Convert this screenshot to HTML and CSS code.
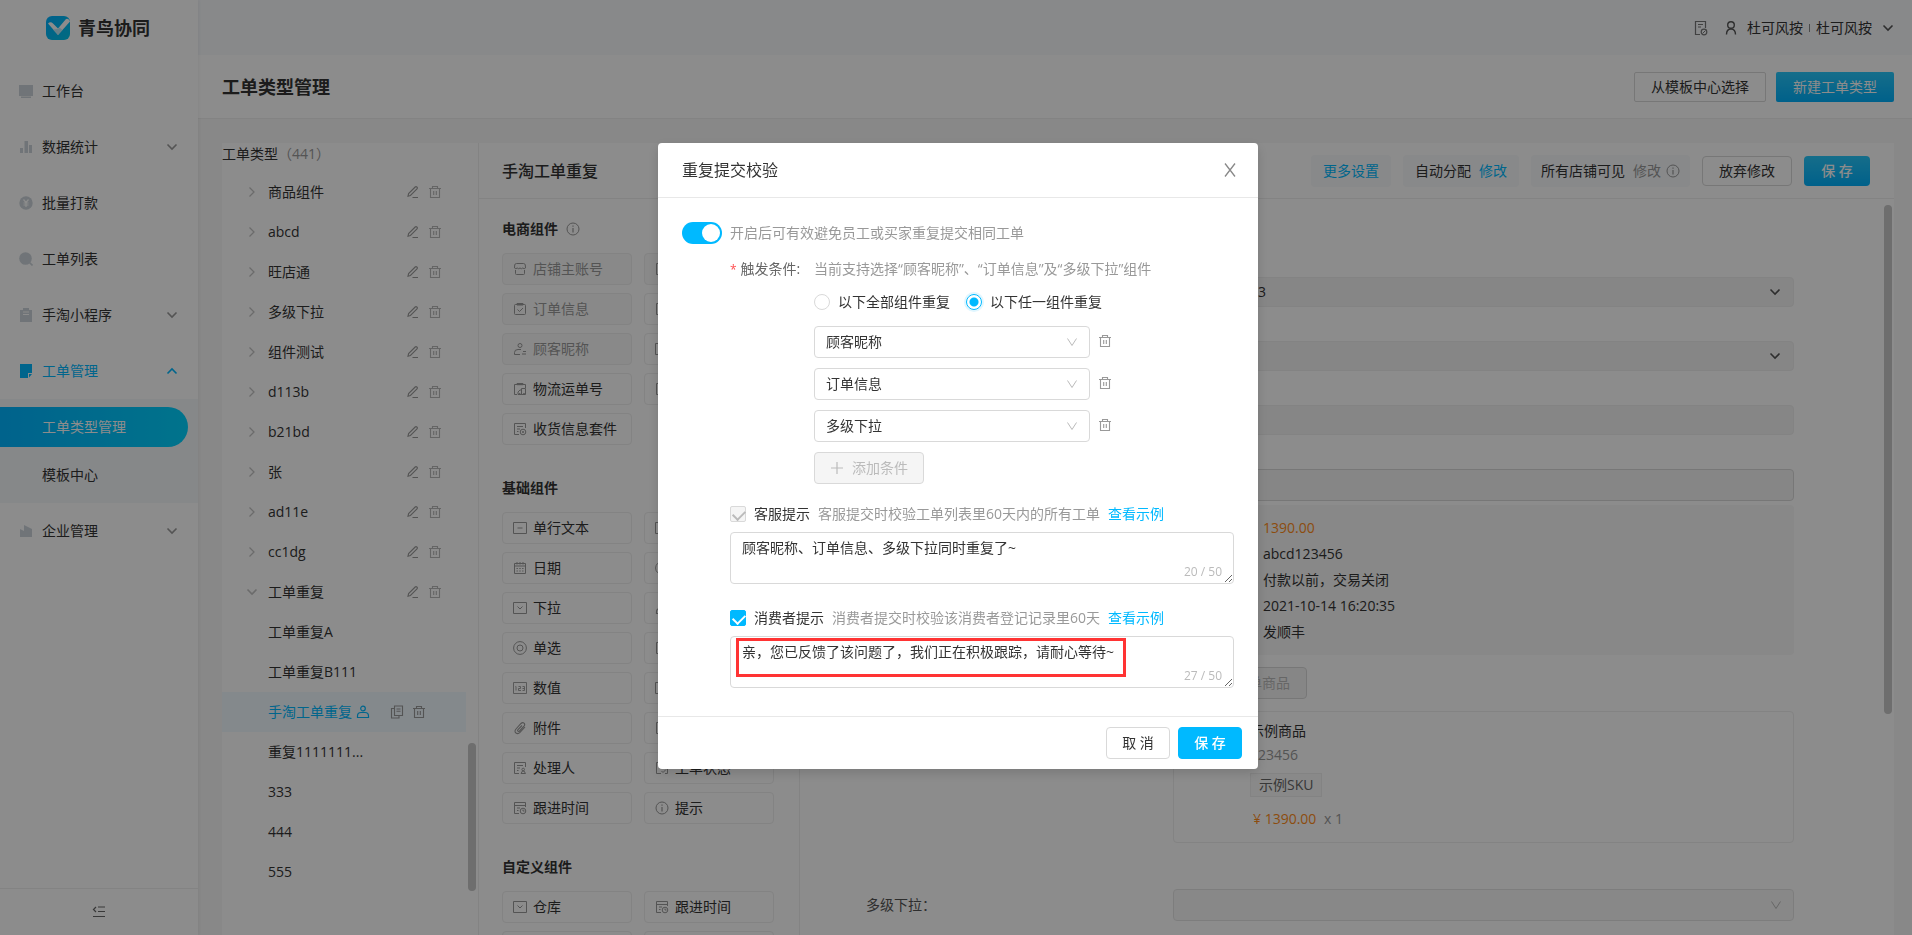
FILE: index.html
```html
<!DOCTYPE html>
<html lang="zh-CN">
<head>
<meta charset="utf-8">
<title>工单类型管理</title>
<link rel="stylesheet" href="styles.css">
</head>
<body>
<svg class="sprite" aria-hidden="true">
  <symbol id="down" viewBox="0 0 12 12"><path d="M1.5 3.5 6 8l4.500-4.500" fill="none" stroke="currentColor" stroke-width="1.600"/></symbol>
  <symbol id="up" viewBox="0 0 12 12"><path d="M1.500 8.500 6 4l4.500 4.500" fill="none" stroke="currentColor" stroke-width="1.600"/></symbol>
  <symbol id="right" viewBox="0 0 12 12"><path d="M3.500 1.500 8 6l-4.500 4.500" fill="none" stroke="currentColor" stroke-width="1.300"/></symbol>
  <symbol id="thin-down" viewBox="0 0 12 12"><path d="M1.500 2.500 6 9.500l4.500-7" fill="none" stroke="currentColor" stroke-width="1"/></symbol>
  <symbol id="edit" viewBox="0 0 14 14"><path d="M2 11.200 2.600 8.600 9.200 2q.8-.8 1.600 0l.2.200q.8.800 0 1.600L4.400 10.400zM6.500 12.500H12" fill="none" stroke="currentColor" stroke-width="1.100"/></symbol>
  <symbol id="trash" viewBox="0 0 14 14"><path d="M1 3.500h12M4.500 3.500v-2h5v2M2.500 3.500v9h9v-9M5.700 6v4M8.300 6v4" fill="none" stroke="currentColor" stroke-width="1.100"/></symbol>
  <symbol id="copy" viewBox="0 0 14 14"><path d="M4.500 1h8v9.500h-8zM4.500 3.500h-3V13h7.500v-2.500M6.500 4h4M6.500 6.200h4" fill="none" stroke="currentColor" stroke-width="1.100"/></symbol>
  <symbol id="person" viewBox="0 0 14 14"><circle cx="7" cy="3.500" r="2.300" fill="none" stroke="currentColor" stroke-width="1.200"/><path d="M1.500 12.500V11q0-3.500 3.500-3.500h4q3.500 0 3.500 3.500v1.500z" fill="none" stroke="currentColor" stroke-width="1.200"/></symbol>
  <symbol id="info" viewBox="0 0 14 14"><circle cx="7" cy="7" r="6" fill="none" stroke="currentColor"/><path d="M7 6v4.500M7 3.500v1.300" fill="none" stroke="currentColor" stroke-width="1.200"/></symbol>
  <symbol id="shop" viewBox="0 0 14 14"><path d="M3.500 1.500h7q1.500 0 1.800 1.500l.2 3q-1.300 1.400-2.700 0-1.400 1.400-2.800 0-1.400 1.400-2.800 0-1.400 1.400-2.700 0l.2-3q.3-1.500 1.800-1.500zM2.500 8v3.500q0 1 1 1h7q1 0 1-1V8" fill="none" stroke="currentColor"/></symbol>
  <symbol id="order" viewBox="0 0 14 14"><path d="M2.500 2.500h9q1 0 1 1v8q0 1-1 1h-9q-1 0-1-1v-8q0-1 1-1zM4 1.500h6v1.500H4zM4.500 7.500l2 2 3.500-3.500" fill="none" stroke="currentColor"/></symbol>
  <symbol id="nick" viewBox="0 0 14 14"><circle cx="7" cy="3.500" r="2" fill="none" stroke="currentColor"/><path d="M8 7.500H5q-3.500 0-3.500 3v2H7M10 9.500h3M9 12h4" fill="none" stroke="currentColor"/></symbol>
  <symbol id="ship" viewBox="0 0 14 14"><path d="M12.500 6V2.500h-11v10H4M4 1.500h6v1.200H4zM5 12.500V10l2-2h1.500v4.500zM8.500 6.500h4v6h-4z" fill="none" stroke="currentColor"/><circle cx="6.500" cy="12" r="1" fill="currentColor"/><circle cx="11" cy="12" r="1" fill="currentColor"/></symbol>
  <symbol id="doc" viewBox="0 0 14 14"><path d="M6 12.500H1.500v-11h11V6M4 4.500h6M4 7h3M4 9.500h1.500" fill="none" stroke="currentColor"/><circle cx="10" cy="10" r="2.800" fill="none" stroke="currentColor"/><circle cx="10" cy="10" r="1" fill="currentColor"/></symbol>
  <symbol id="time" viewBox="0 0 14 14"><path d="M6 12.500H1.500v-11h11V6M1.500 4.500h11M4 7h3M4 9.500h1.500" fill="none" stroke="currentColor"/><circle cx="10" cy="10" r="2.800" fill="none" stroke="currentColor"/><path d="M10 8.500V10h1.500" fill="none" stroke="currentColor"/></symbol>
  <symbol id="handler" viewBox="0 0 14 14"><path d="M6 12.500H1.500v-11h11V6M4 4.500h6M4 7h3M4 9.500h1.500M8 12.500h4.500l-1.500-2.500h-1.500z" fill="none" stroke="currentColor"/><circle cx="10.200" cy="8.500" r="1.300" fill="none" stroke="currentColor"/></symbol>
  <symbol id="status" viewBox="0 0 14 14"><path d="M6 12.500H1.500v-11h11v11H10M4 4.500h6M4 7h3M6.500 10l1.500 1.500L11 8.500" fill="none" stroke="currentColor"/></symbol>
  <symbol id="line" viewBox="0 0 14 14"><path d="M.5 1.500h13v11H.5zM4.500 7h5" fill="none" stroke="currentColor"/></symbol>
  <symbol id="date" viewBox="0 0 14 14"><path d="M1.500 2.500h11v10h-11zM1.500 5h11M4 1v2.500M7 1v2.500M10 1v2.500" fill="none" stroke="currentColor"/><path d="M3.500 7.500h7M3.500 10h7" stroke="currentColor" stroke-dasharray="1.400"/></symbol>
  <symbol id="drop" viewBox="0 0 14 14"><path d="M.5 1.500h13v11H.5zM4.500 5.500 7 8l2.500-2.500" fill="none" stroke="currentColor"/></symbol>
  <symbol id="ring" viewBox="0 0 14 14"><circle cx="7" cy="7" r="6.400" fill="none" stroke="currentColor"/><circle cx="7" cy="7" r="3" fill="none" stroke="currentColor"/></symbol>
  <symbol id="num" viewBox="0 0 14 14"><path d="M.5 1.500h13v11H.5zM3 5.500v4M2.500 5.500H3M5.500 5.500h2v2h-2v2h2.500M9.500 5.500h2v4h-2M9.500 7.500h2" fill="none" stroke="currentColor" stroke-width=".9"/></symbol>
  <symbol id="clip" viewBox="0 0 14 14"><path d="M12 6 7 11.400q-2 2-4 .6-2-1.600 0-4L8 2.500q1.600-1.500 3-.3 1.400 1.300 0 3L6.500 10q-1 .8-1.600.2-.7-.7.100-1.600L9 4.500" fill="none" stroke="currentColor" stroke-width="1.100"/></symbol>
  <symbol id="box" viewBox="0 0 14 14"><path d="M1.500 1.500h11v11h-11zM4 5h6M4 8h6" fill="none" stroke="currentColor"/></symbol>
</svg>

<div class="app">
  <aside class="side">
    <div class="brand">
      <svg class="brand-mark" viewBox="0 0 24 24"><defs><linearGradient id="bg" x1="0" y1="0" x2="1" y2="1"><stop offset="0" stop-color="#00b0ff"/><stop offset="1" stop-color="#00c4ea"/></linearGradient></defs><rect width="24" height="24" rx="6" fill="url(#bg)"/><path d="M2 7.500q2.500-2.500 5 0l5 5L20 3q3-1 4 2.500L12 19z" fill="#fff"/><path d="M7 13.500 12 19l4.500-5-3-2.500-1.500 1.500z" fill="#bfe9f7"/></svg>
      <span>青鸟协同</span>
    </div>
    <nav class="menu">
      <a class="item" href="#"><svg class="mi" viewBox="0 0 14 14"><path d="M0 1h14v11H0zM2 12.500h10V14H2z" fill="currentColor"/></svg>工作台</a>
      <a class="item" href="#"><svg class="mi" viewBox="0 0 14 14"><path d="M1 8h3v5H1zM5.500 1h3.500v12H5.500zM10 5h3v8h-3z" fill="currentColor"/></svg>数据统计<svg class="arrow"><use href="#down"/></svg></a>
      <a class="item" href="#"><svg class="mi" viewBox="0 0 14 14"><circle cx="7" cy="7" r="6.700" fill="currentColor"/><path d="M4.500 3.500 7 6.500l2.500-3M7 6.500V11M4.500 7h5M4.500 9h5" fill="none" stroke="#fff" stroke-width="1.200"/></svg>批量打款</a>
      <a class="item" href="#"><svg class="mi" viewBox="0 0 14 14"><circle cx="6.500" cy="6.500" r="6.300" fill="currentColor"/><path d="m10 10 3.500 3.500" stroke="currentColor" stroke-width="1.600"/></svg>工单列表</a>
      <a class="item" href="#"><svg class="mi" viewBox="0 0 14 14"><path d="M1 2h3V0h6v2h3v12H1z" fill="currentColor"/><path d="M4 4h6M4 6.500h6" stroke="#fff"/></svg>手淘小程序<svg class="arrow"><use href="#down"/></svg></a>
      <a class="item open" href="#"><svg class="mi" viewBox="0 0 14 14"><path d="M1 0h12v9H9v5H1zM10 10h3l-3 3.500z" fill="currentColor"/></svg>工单管理<svg class="arrow"><use href="#up"/></svg></a>
      <div class="submenu">
        <a class="sub active" href="#">工单类型管理</a>
        <a class="sub" href="#">模板中心</a>
      </div>
      <a class="item" href="#"><svg class="mi" viewBox="0 0 14 14"><path d="M1 5l4 2V1l8 4v8H1z" fill="currentColor"/></svg>企业管理<svg class="arrow"><use href="#down"/></svg></a>
    </nav>
    <button class="collapse" type="button" aria-label="收起"><svg viewBox="0 0 14 14"><path d="M4 2 1.500 4.500 4 7M6 2h7M6 6.500h7M1 11.500h12" fill="none" stroke="currentColor" stroke-width="1.200"/></svg></button>
  </aside>

  <div class="main">
    <header class="top">
      <svg class="ic16" viewBox="0 0 16 16"><path d="M7 14.500H2.500v-13h10V8M5 4.500h5M5 7h3" fill="none" stroke="currentColor" stroke-width="1.200"/><circle cx="11" cy="12" r="2.800" fill="none" stroke="currentColor" stroke-width="1.200"/><path d="m9.500 13.500 3-3" stroke="currentColor"/></svg>
      <svg class="ic16 dark" viewBox="0 0 16 16"><circle cx="8" cy="5" r="3.300" fill="none" stroke="currentColor" stroke-width="1.400"/><path d="M3.500 14.500q0-5.500 4.500-5.500t4.500 5.500" fill="none" stroke="currentColor" stroke-width="1.400"/></svg>
      <span class="who">杜可风按</span><i class="bar"></i><span>杜可风按</span>
      <svg class="arrow dark"><use href="#down"/></svg>
    </header>
    <div class="titlebar">
      <h1>工单类型管理</h1>
      <button class="btn square" type="button">从模板中心选择</button>
      <button class="btn square grad" type="button">新建工单类型</button>
    </div>
    <div class="content">
      <section class="tree">
        <div class="tree-title">工单类型<span>（441）</span></div>
        <ul>
          <li><svg class="caret"><use href="#right"/></svg><span>商品组件</span><svg class="act"><use href="#edit"/></svg><svg class="act del"><use href="#trash"/></svg></li>
          <li><svg class="caret"><use href="#right"/></svg><span>abcd</span><svg class="act"><use href="#edit"/></svg><svg class="act del"><use href="#trash"/></svg></li>
          <li><svg class="caret"><use href="#right"/></svg><span>旺店通</span><svg class="act"><use href="#edit"/></svg><svg class="act del"><use href="#trash"/></svg></li>
          <li><svg class="caret"><use href="#right"/></svg><span>多级下拉</span><svg class="act"><use href="#edit"/></svg><svg class="act del"><use href="#trash"/></svg></li>
          <li><svg class="caret"><use href="#right"/></svg><span>组件测试</span><svg class="act"><use href="#edit"/></svg><svg class="act del"><use href="#trash"/></svg></li>
          <li><svg class="caret"><use href="#right"/></svg><span>d113b</span><svg class="act"><use href="#edit"/></svg><svg class="act del"><use href="#trash"/></svg></li>
          <li><svg class="caret"><use href="#right"/></svg><span>b21bd</span><svg class="act"><use href="#edit"/></svg><svg class="act del"><use href="#trash"/></svg></li>
          <li><svg class="caret"><use href="#right"/></svg><span>张</span><svg class="act"><use href="#edit"/></svg><svg class="act del"><use href="#trash"/></svg></li>
          <li><svg class="caret"><use href="#right"/></svg><span>ad11e</span><svg class="act"><use href="#edit"/></svg><svg class="act del"><use href="#trash"/></svg></li>
          <li><svg class="caret"><use href="#right"/></svg><span>cc1dg</span><svg class="act"><use href="#edit"/></svg><svg class="act del"><use href="#trash"/></svg></li>
          <li><svg class="caret"><use href="#down"/></svg><span>工单重复</span><svg class="act"><use href="#edit"/></svg><svg class="act del"><use href="#trash"/></svg></li>
          <li class="leaf"><span>工单重复A</span></li>
          <li class="leaf"><span>工单重复B111</span></li>
          <li class="leaf current"><span>手淘工单重复</span><svg class="act user"><use href="#person"/></svg><svg class="act"><use href="#copy"/></svg><svg class="act"><use href="#trash"/></svg></li>
          <li class="leaf"><span>重复1111111...</span></li>
          <li class="leaf"><span>333</span></li>
          <li class="leaf"><span>444</span></li>
          <li class="leaf"><span>555</span></li>
        </ul>
        <i class="thumb tree-thumb"></i>
      </section>

      <section class="editor">
        <div class="editor-head">
          <h2>手淘工单重复</h2>
          <div class="tag"><a href="#">更多设置</a></div>
          <div class="tag">自动分配<a href="#">修改</a></div>
          <div class="tag wide">所有店铺可见<span class="muted">修改</span><svg class="ic14"><use href="#info"/></svg></div>
          <button class="btn" type="button">放弃修改</button>
          <button class="btn grad save" type="button">保 存</button>
        </div>
        <div class="editor-body">
          <div class="palette">
            <h3>电商组件<svg class="ic14"><use href="#info"/></svg></h3>
            <div class="tiles">
              <button class="tile" disabled><svg><use href="#shop"/></svg>店铺主账号</button><button class="tile" disabled aria-label="组件"><svg><use href="#box"/></svg></button>
              <button class="tile" disabled><svg><use href="#order"/></svg>订单信息</button><button class="tile" aria-label="组件"><svg><use href="#box"/></svg></button>
              <button class="tile" disabled><svg><use href="#nick"/></svg>顾客昵称</button><button class="tile" aria-label="组件"><svg><use href="#line"/></svg></button>
              <button class="tile"><svg><use href="#ship"/></svg>物流运单号</button><button class="tile" aria-label="组件"><svg><use href="#box"/></svg></button>
              <button class="tile"><svg><use href="#doc"/></svg>收货信息套件</button>
            </div>
            <h3>基础组件</h3>
            <div class="tiles">
              <button class="tile"><svg><use href="#line"/></svg>单行文本</button><button class="tile" aria-label="组件"><svg><use href="#line"/></svg></button>
              <button class="tile"><svg><use href="#date"/></svg>日期</button><button class="tile" aria-label="组件"><svg><use href="#ring"/></svg></button>
              <button class="tile"><svg><use href="#drop"/></svg>下拉</button><button class="tile" aria-label="组件"><svg><use href="#person"/></svg></button>
              <button class="tile"><svg><use href="#ring"/></svg>单选</button><button class="tile" aria-label="组件"><svg><use href="#box"/></svg></button>
              <button class="tile"><svg><use href="#num"/></svg>数值</button><button class="tile" aria-label="组件"><svg><use href="#line"/></svg></button>
              <button class="tile"><svg><use href="#clip"/></svg>附件</button><button class="tile" aria-label="组件"><svg><use href="#box"/></svg></button>
              <button class="tile"><svg><use href="#handler"/></svg>处理人</button><button class="tile"><svg><use href="#status"/></svg>工单状态</button>
              <button class="tile"><svg><use href="#time"/></svg>跟进时间</button><button class="tile"><svg><use href="#info"/></svg>提示</button>
            </div>
            <h3>自定义组件</h3>
            <div class="tiles">
              <button class="tile"><svg><use href="#drop"/></svg>仓库</button><button class="tile"><svg><use href="#time"/></svg>跟进时间</button>
              <button class="tile" aria-label="组件"></button><button class="tile" aria-label="组件"></button>
            </div>
          </div>
          <div class="canvas">
            <div class="field plain first">3<svg class="arrow dark"><use href="#down"/></svg></div>
            <div class="field plain second"><svg class="arrow dark"><use href="#down"/></svg></div>
            <div class="field plain third"></div>
            <input class="field fourth" disabled aria-label="订单信息">
            <div class="order">
              <p class="price">1390.00</p><p>abcd123456</p><p>付款以前，交易关闭</p><p>2021-10-14 16:20:35</p><p>发顺丰</p>
            </div>
            <button class="btn pick" type="button" disabled>订单商品</button>
            <div class="goods">
              <p>示例商品</p>
              <p class="muted">123456</p>
              <span class="sku">示例SKU</span>
              <p class="cost"><b>¥ 1390.00</b> x 1</p>
            </div>
            <div class="row">
              <label for="multi">多级下拉：</label>
              <div class="picker"><select id="multi" class="field" disabled><option></option></select><svg class="arrow"><use href="#thin-down"/></svg></div>
            </div>
            <i class="thumb canvas-thumb"></i>
          </div>
        </div>
      </section>
    </div>
  </div>
</div>

<div class="mask">
  <div class="modal" role="dialog" aria-modal="true" aria-labelledby="dlg">
    <div class="modal-head">
      <h2 id="dlg">重复提交校验</h2>
      <button class="close" type="button" aria-label="关闭"><svg viewBox="0 0 14 14"><path d="m2 .5 10 13M12 .5l-10 13" stroke="currentColor" stroke-width="1.300"/></svg></button>
    </div>
    <div class="modal-body">
      <label class="switch-row"><input class="switch" type="checkbox" checked>开启后可有效避免员工或买家重复提交相同工单</label>
      <div class="cond">
        <div class="cond-label"><em>*</em>触发条件:</div>
        <div class="cond-main">
          <p class="help">当前支持选择“顾客昵称”、“订单信息”及“多级下拉”组件</p>
          <div class="radios">
            <label><input type="radio" name="mode">以下全部组件重复</label>
            <label><input type="radio" name="mode" checked>以下任一组件重复</label>
          </div>
          <div class="line"><div class="picker"><select class="sel" aria-label="条件一"><option>顾客昵称</option></select><svg class="arrow"><use href="#thin-down"/></svg></div><button class="del-btn" type="button" aria-label="删除"><svg><use href="#trash"/></svg></button></div>
          <div class="line"><div class="picker"><select class="sel" aria-label="条件二"><option>订单信息</option></select><svg class="arrow"><use href="#thin-down"/></svg></div><button class="del-btn" type="button" aria-label="删除"><svg><use href="#trash"/></svg></button></div>
          <div class="line"><div class="picker"><select class="sel" aria-label="条件三"><option>多级下拉</option></select><svg class="arrow"><use href="#thin-down"/></svg></div><button class="del-btn" type="button" aria-label="删除"><svg><use href="#trash"/></svg></button></div>
          <button class="add" type="button" disabled><svg viewBox="0 0 12 12"><path d="M6 0v12M0 6h12" stroke="currentColor" stroke-width="1.200"/></svg>添加条件</button>
        </div>
      </div>
      <div class="tip">
        <div class="tip-head"><label><input type="checkbox" checked disabled>客服提示</label><span>客服提交时校验工单列表里60天内的所有工单</span><a href="#">查看示例</a></div>
        <div class="area"><textarea aria-label="客服提示">顾客昵称、订单信息、多级下拉同时重复了~</textarea><span class="count">20 / 50</span></div>
      </div>
      <div class="tip">
        <div class="tip-head"><label><input type="checkbox" checked>消费者提示</label><span>消费者提交时校验该消费者登记记录里60天</span><a href="#">查看示例</a></div>
        <div class="area"><textarea aria-label="消费者提示">亲，您已反馈了该问题了，我们正在积极跟踪，请耐心等待~</textarea><span class="count">27 / 50</span><i class="highlight"></i></div>
      </div>
    </div>
    <div class="modal-foot">
      <button class="btn tall" type="button">取 消</button>
      <button class="btn tall primary" type="button">保 存</button>
    </div>
  </div>
</div>
</body>
</html>
```

FILE: styles.css
```css
* { box-sizing: border-box; }
body, input, button, select, textarea {
  font-family: "Open Sans", "Noto Sans CJK SC", sans-serif;
  font-size: 14px;
  line-height: 22px;
  color: #333;
}
body { margin: 0; height: 100vh; overflow: hidden; background: #f7f7f7; }
h1, h2, h3, p, ul { margin: 0; padding: 0; }
ul { list-style: none; }
a { color: #00b9ff; text-decoration: none; }
svg { flex: none; display: block; }
.sprite { position: absolute; width: 0; height: 0; }
.muted { color: #999; }
.ic14 { width: 14px; height: 14px; color: #999; }
.ic16 { width: 16px; height: 16px; color: #777; }
.arrow { width: 12px; height: 12px; color: #999; }
.dark { color: #555; }

.app { display: flex; height: 100vh; }

.side {
  flex: none;
  display: flex;
  flex-direction: column;
  width: 198px;
  background: #fff;
  box-shadow: 1px 0 3px rgba(0, 0, 0, .05);
  position: relative;
}
.brand {
  display: flex;
  align-items: center;
  gap: 8px;
  height: 55px;
  margin-bottom: 8px;
  padding-left: 46px;
  font-size: 18px;
  font-weight: 700;
}
.brand-mark { width: 24px; height: 24px; }
.menu { flex: 1; }
.item {
  display: flex;
  align-items: center;
  height: 56px;
  padding: 0 20px 0 19px;
  color: #333;
}
.item .mi { width: 14px; height: 14px; margin-right: 9px; color: #ccd4da; }
.item .arrow { margin-left: auto; }
.item.open, .item.open .mi, .item.open .arrow { color: #00b9ff; }
.submenu {
  display: flex;
  flex-direction: column;
  gap: 8px;
  padding: 8px 10px 8px 0;
  background: #f5f7fa;
}
.sub {
  display: flex;
  align-items: center;
  height: 40px;
  padding-left: 42px;
  border-radius: 0 20px 20px 0;
  color: #333;
}
.sub.active { color: #fff; background: linear-gradient(90deg, #00b4ff, #00d2ff); }
.collapse {
  display: flex;
  align-items: center;
  justify-content: center;
  height: 47px;
  border: 0;
  border-top: 1px solid #eee;
  background: none;
  color: #666;
}
.collapse svg { width: 14px; height: 14px; }

.main { flex: 1; display: flex; flex-direction: column; min-width: 0; }
.top {
  display: flex;
  align-items: center;
  justify-content: flex-end;
  flex: none;
  height: 55px;
  padding-right: 18px;
  background: #f7f9fc;
}
.top .ic16 { margin-right: 14px; }
.top .ic16.dark { margin-right: 8px; }
.top .bar { width: 1px; height: 8px; margin: 0 6px; background: #888; }
.top .arrow { margin-left: 10px; }
.titlebar {
  display: flex;
  align-items: center;
  flex: none;
  gap: 10px;
  height: 64px;
  padding: 0 18px 0 24px;
  background: #fff;
  border-bottom: 1px solid #eee;
}
h1 { flex: 1; font-size: 18px; line-height: 26px; font-weight: 700; }

.btn {
  height: 30px;
  padding: 0 16px;
  border: 1px solid #d9d9d9;
  border-radius: 4px;
  background: #fff;
  line-height: 20px;
  white-space: nowrap;
}
.btn.square { border-radius: 2px; }
.btn.grad { border: 0; padding: 0 17px; color: #fff; background: linear-gradient(#28c8fb, #00b0fb); }
.btn.save { min-width: 66px; font-weight: 500; }
.btn.tall { height: 32px; width: 64px; padding: 0; }
.btn.primary { border-color: #00b9ff; background: #00b9ff; color: #fff; font-weight: 500; }

.content {
  flex: 1;
  display: flex;
  min-height: 0;
  margin: 24px 18px 0 24px;
  background: #fff;
}
.tree {
  position: relative;
  flex: none;
  width: 257px;
  border-right: 1px solid #eee;
  overflow: hidden;
}
.tree-title { height: 29px; }
.tree-title span { color: #999; }
.tree li {
  display: flex;
  align-items: center;
  height: 40px;
  margin-right: 12px;
  padding: 0 24px 0 24px;
}
.tree .caret { width: 12px; height: 12px; margin-right: 10px; color: #c4c4c4; }
.tree li > span { margin-right: auto; }
.tree .act { width: 14px; height: 14px; margin-left: 8px; color: #999; }
.tree .del { color: #b8b8b8; }
.tree .leaf { padding-left: 46px; }
.tree .current { background: #f0f9ff; color: #00b9ff; padding-right: 40px; }
.tree .current .user { margin-left: 4px; margin-right: auto; color: #00b9ff; }
.tree .current > span { margin-right: 0; }
.thumb { position: absolute; border-radius: 4px; background: #c8c8c8; }
.tree-thumb { right: 2px; top: 600px; width: 8px; height: 148px; }

.editor { flex: 1; display: flex; flex-direction: column; min-width: 0; }
.editor-head {
  display: flex;
  align-items: center;
  flex: none;
  gap: 12px;
  height: 56px;
  padding: 0 24px 0 23px;
  border-bottom: 1px solid #eee;
}
.editor-head h2 { flex: 1; font-size: 16px; line-height: 24px; font-weight: 500; }
.tag {
  display: flex;
  align-items: center;
  gap: 8px;
  height: 32px;
  padding: 0 12px;
  border-radius: 4px;
  background: #f7f9fc;
  white-space: nowrap;
}
.tag.wide { padding: 0 10px; }
.tag.wide .ic14 { margin-left: -3px; }
.editor-body { flex: 1; display: flex; min-height: 0; }
.palette {
  flex: none;
  width: 321px;
  padding: 19px 25px 0 23px;
  border-right: 1px solid #eee;
  overflow: hidden;
}
h3 { display: flex; align-items: center; gap: 8px; height: 22px; font-size: 14px; font-weight: 700; }
.tiles {
  display: grid;
  grid-template-columns: 1fr 1fr;
  gap: 8px 12px;
  margin: 13px 0 32px;
}
.tile {
  display: flex;
  align-items: center;
  gap: 6px;
  height: 32px;
  padding: 0 10px;
  border: 1px solid #eee;
  border-radius: 4px;
  background: #fff;
  white-space: nowrap;
}
.tile svg { width: 14px; height: 14px; color: #999; }
.tile:disabled { background: #f9f9f9; color: #999; }

.canvas {
  position: relative;
  flex: 1;
  min-width: 0;
  padding: 78px 100px 0 373px;
  overflow: hidden;
}
.field {
  display: flex;
  align-items: center;
  justify-content: space-between;
  width: 100%;
  height: 32px;
  border: 1px solid #d9d9d9;
  border-radius: 4px;
  background: #f5f5f5;
}
.field.plain { height: 30px; padding: 0 12px 0 84px; border-color: #eee; }
.first, .second { margin-bottom: 34px; }
.field .arrow { margin-left: auto; }
.fourth { display: block; margin: 34px 0 4px; }
.order { padding: 10px 0 10px 90px; border-radius: 4px; background: #f7f7f7; }
.order p { line-height: 26px; }
.order .price { color: #ff8c1a; }
.btn.pick { display: block; width: 134px; height: 32px; margin: 12px 0; text-align: right; background: #f5f5f5; color: #bbb; }
.goods { height: 132px; padding: 7px 0 0 76px; border: 1px solid #eee; border-radius: 4px; }
.goods p { line-height: 24px; }
.goods .sku { display: inline-block; height: 24px; margin: 6px 0 10px; padding: 0 8px; border: 1px solid #eee; background: #fafafa; color: #666; line-height: 22px; }
.goods .cost { padding-left: 3px; color: #999; }
.goods b { margin-right: 4px; font-weight: 400; color: #ff8c1a; }
.row { display: flex; align-items: center; margin: 46px 0 0 -307px; }
.row label { width: 307px; color: #555; }
.row .picker { flex: 1; }
.canvas-thumb { right: 2px; top: 6px; width: 8px; height: 509px; }

.picker { position: relative; }
.picker select { appearance: none; }
.picker .arrow { position: absolute; right: 12px; top: 10px; color: #bbb; pointer-events: none; }

.mask {
  position: fixed;
  inset: 0;
  display: flex;
  justify-content: center;
  align-items: flex-start;
  padding: 143px 0 0 4px;
  background: rgba(0, 0, 0, .45);
}
.modal {
  width: 600px;
  border-radius: 4px;
  background: #fff;
  box-shadow: 0 4px 12px rgba(0, 0, 0, .15);
}
.modal-head {
  display: flex;
  align-items: center;
  justify-content: space-between;
  height: 55px;
  padding: 0 20px 0 24px;
  border-bottom: 1px solid #e8e8e8;
}
.modal-head h2 { font-size: 16px; line-height: 24px; font-weight: 400; }
.close { display: flex; padding: 1px; border: 0; background: none; color: #888; }
.close svg { width: 14px; height: 14px; }
.modal-body { padding: 24px 24px 28px; }
.switch-row { display: flex; align-items: center; gap: 8px; color: #999; }
input[type="checkbox"], input[type="radio"] { appearance: none; flex: none; margin: 0; }
.switch { width: 40px; height: 22px; border-radius: 11px; background: #00b9ff; }
.switch::before {
  content: "";
  display: block;
  width: 18px;
  height: 18px;
  margin: 2px 2px 2px 20px;
  border-radius: 50%;
  background: #fff;
}
.cond { display: flex; margin: 14px 0 19px 48px; }
.cond-label { width: 84px; color: #666; }
.cond-label em { margin-right: 4px; color: #ff4d4f; font-style: normal; font-size: 12px; }
.help { color: #999; white-space: nowrap; }
.radios { display: flex; gap: 16px; margin: 11px 0 13px; }
.radios label { display: flex; align-items: center; gap: 8px; }
.radios input { width: 16px; height: 16px; border: 1px solid #d9d9d9; border-radius: 50%; }
.radios input:checked {
  border-color: #00b9ff;
  background: radial-gradient(circle, #00b9ff 4px, #fff 5px);
  box-shadow: 0 0 0 2px #e0f6ff;
}
.line { display: flex; align-items: center; gap: 8px; margin-bottom: 10px; }
.sel { display: block; width: 276px; height: 32px; padding: 0 11px; border: 1px solid #d9d9d9; border-radius: 4px; background: #fff; }
.del-btn { display: flex; padding: 0 0 2px; border: 0; background: none; color: #999; }
.del-btn svg { width: 14px; height: 14px; }
.add {
  display: flex;
  align-items: center;
  gap: 9px;
  height: 32px;
  padding: 0 15px 0 16px;
  border: 1px solid #d9d9d9;
  border-radius: 4px;
  background: #f5f5f5;
  color: #bbb;
}
.add svg { width: 12px; height: 12px; }
.tip { margin: 0 0 23px 48px; }
.tip:last-child { margin-bottom: 0; }
.tip-head { display: flex; align-items: center; gap: 8px; margin-bottom: 7px; white-space: nowrap; }
.tip-head label { display: flex; align-items: center; gap: 8px; }
.tip-head span { color: #999; }
.tip-head input {
  width: 16px;
  height: 16px;
  border: 1px solid #00b9ff;
  border-radius: 2px;
  background: #00b9ff;
  color: #fff;
}
.tip-head input::before {
  content: "";
  display: block;
  width: 10px;
  height: 6px;
  margin: 3px 2px;
  border: solid currentColor;
  border-width: 0 0 2px 2px;
  transform: rotate(-45deg);
}
.tip-head input:disabled { border-color: #d9d9d9; background: #f5f5f5; color: #bbb; }
.area { position: relative; }
textarea {
  display: block;
  width: 100%;
  height: 52px;
  padding: 4px 11px;
  border: 1px solid #d9d9d9;
  border-radius: 4px;
  resize: vertical;
  overflow: auto;
}
.count { position: absolute; right: 12px; bottom: 2px; line-height: 20px; font-size: 12px; color: #bbb; }
.highlight { position: absolute; left: 6px; top: 2px; width: 390px; height: 39px; border: 3px solid #ff3333; pointer-events: none; }
.modal-foot {
  display: flex;
  justify-content: flex-end;
  gap: 8px;
  padding: 10px 16px;
  border-top: 1px solid #e8e8e8;
}
```
